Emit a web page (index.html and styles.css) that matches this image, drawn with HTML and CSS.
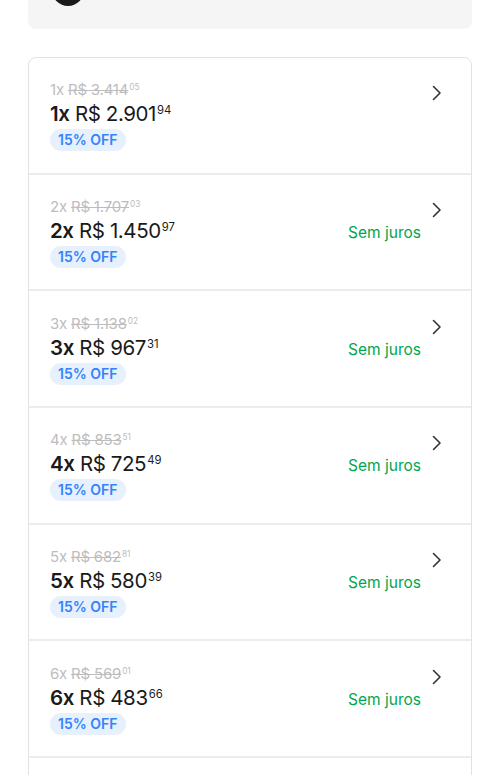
FILE: index.html
```html
<!DOCTYPE html>
<html lang="pt-BR">
<head>
<meta charset="utf-8">
<title>Parcelas</title>
<link rel="stylesheet" href="styles.css">
</head>
<body>
<div class="page">
  <div class="summary">
    <span class="avatar"></span>
  </div>
  <ul class="options">
    <li class="option">
      <div class="prices">
        <div class="old"><span>1x </span><s>R$ 3.414</s><sup>05</sup></div>
        <div class="now"><b>1x</b> R$ 2.901<sup>94</sup></div>
        <span class="badge">15% OFF</span>
      </div>
      <span class="note"></span>
      <svg class="chev" width="10" height="16" viewBox="0 0 10 16"><path d="M1.5 1.5 L8 8 L1.5 14.5" fill="none" stroke="#333" stroke-width="1.6" stroke-linecap="round" stroke-linejoin="round"/></svg>
    </li>
    <li class="option">
      <div class="prices">
        <div class="old"><span>2x </span><s>R$ 1.707</s><sup>03</sup></div>
        <div class="now"><b>2x</b> R$ 1.450<sup>97</sup></div>
        <span class="badge">15% OFF</span>
      </div>
      <span class="note">Sem juros</span>
      <svg class="chev" width="10" height="16" viewBox="0 0 10 16"><path d="M1.5 1.5 L8 8 L1.5 14.5" fill="none" stroke="#333" stroke-width="1.6" stroke-linecap="round" stroke-linejoin="round"/></svg>
    </li>
    <li class="option">
      <div class="prices">
        <div class="old"><span>3x </span><s>R$ 1.138</s><sup>02</sup></div>
        <div class="now"><b>3x</b> R$ 967<sup>31</sup></div>
        <span class="badge">15% OFF</span>
      </div>
      <span class="note">Sem juros</span>
      <svg class="chev" width="10" height="16" viewBox="0 0 10 16"><path d="M1.5 1.5 L8 8 L1.5 14.5" fill="none" stroke="#333" stroke-width="1.6" stroke-linecap="round" stroke-linejoin="round"/></svg>
    </li>
    <li class="option">
      <div class="prices">
        <div class="old"><span>4x </span><s>R$ 853</s><sup>51</sup></div>
        <div class="now"><b>4x</b> R$ 725<sup>49</sup></div>
        <span class="badge">15% OFF</span>
      </div>
      <span class="note">Sem juros</span>
      <svg class="chev" width="10" height="16" viewBox="0 0 10 16"><path d="M1.5 1.5 L8 8 L1.5 14.5" fill="none" stroke="#333" stroke-width="1.6" stroke-linecap="round" stroke-linejoin="round"/></svg>
    </li>
    <li class="option">
      <div class="prices">
        <div class="old"><span>5x </span><s>R$ 682</s><sup>81</sup></div>
        <div class="now"><b>5x</b> R$ 580<sup>39</sup></div>
        <span class="badge">15% OFF</span>
      </div>
      <span class="note">Sem juros</span>
      <svg class="chev" width="10" height="16" viewBox="0 0 10 16"><path d="M1.5 1.5 L8 8 L1.5 14.5" fill="none" stroke="#333" stroke-width="1.6" stroke-linecap="round" stroke-linejoin="round"/></svg>
    </li>
    <li class="option">
      <div class="prices">
        <div class="old"><span>6x </span><s>R$ 569</s><sup>01</sup></div>
        <div class="now"><b>6x</b> R$ 483<sup>66</sup></div>
        <span class="badge">15% OFF</span>
      </div>
      <span class="note">Sem juros</span>
      <svg class="chev" width="10" height="16" viewBox="0 0 10 16"><path d="M1.5 1.5 L8 8 L1.5 14.5" fill="none" stroke="#333" stroke-width="1.6" stroke-linecap="round" stroke-linejoin="round"/></svg>
    </li>
    <li class="option option-next"></li>
  </ul>
</div>
</body>
</html>
```

FILE: styles.css
```css
* { box-sizing: border-box; }
html, body { margin: 0; padding: 0; background: #fff; }
body {
  font-family: Inter, "Noto Sans", sans-serif;
  color: #222;
}
.page {
  padding: 0 28px;
}
.summary {
  margin-top: -50px;
  height: 79px;
  background: #f5f5f5;
  border-radius: 8px;
  padding: 24px 24px;
  display: flex;
  align-items: flex-start;
}
.avatar {
  width: 32px;
  height: 32px;
  border-radius: 50%;
  background: #1a1a1a;
}
.options {
  list-style: none;
  margin: 28px 0 0;
  padding: 0;
  border: 1px solid #e2e2e2;
  border-radius: 8px;
}
.option {
  display: grid;
  grid-template-columns: 1fr auto 10px;
  column-gap: 11px;
  padding: 23.33px 29px 21.33px 21px;
  border-bottom: 2px solid #ececec;
}
.option-next {
  height: 60px;
  border-bottom: none;
}
.prices {
  display: flex;
  flex-direction: column;
  align-items: flex-start;
}
.old {
  font-size: 15px;
  line-height: 18px;
  color: #bdbdbd;
  letter-spacing: -0.2px;
}
.old s { text-decoration-thickness: 1px; }
.old sup, .now sup {
  font-size: 0.55em;
  vertical-align: baseline;
  position: relative;
  top: -0.62em;
  line-height: 1;
  margin-left: 1px;
  letter-spacing: 0;
}
.now {
  font-size: 20.5px;
  line-height: 29px;
  color: #1a1a1a;
  letter-spacing: -0.4px;
}
.now b { font-weight: 600; }
.badge {
  margin-top: 1px;
  height: 22px;
  line-height: 22px;
  padding: 0 8px;
  border-radius: 11px;
  background: #e7f0fd;
  color: #3483fa;
  font-size: 14px;
  font-weight: 600;
}
.note {
  align-self: center;
  color: #00a650;
  font-size: 15.5px;
  line-height: 20px;
}
.chev {
  align-self: start;
  margin-top: 4px;
}
```
